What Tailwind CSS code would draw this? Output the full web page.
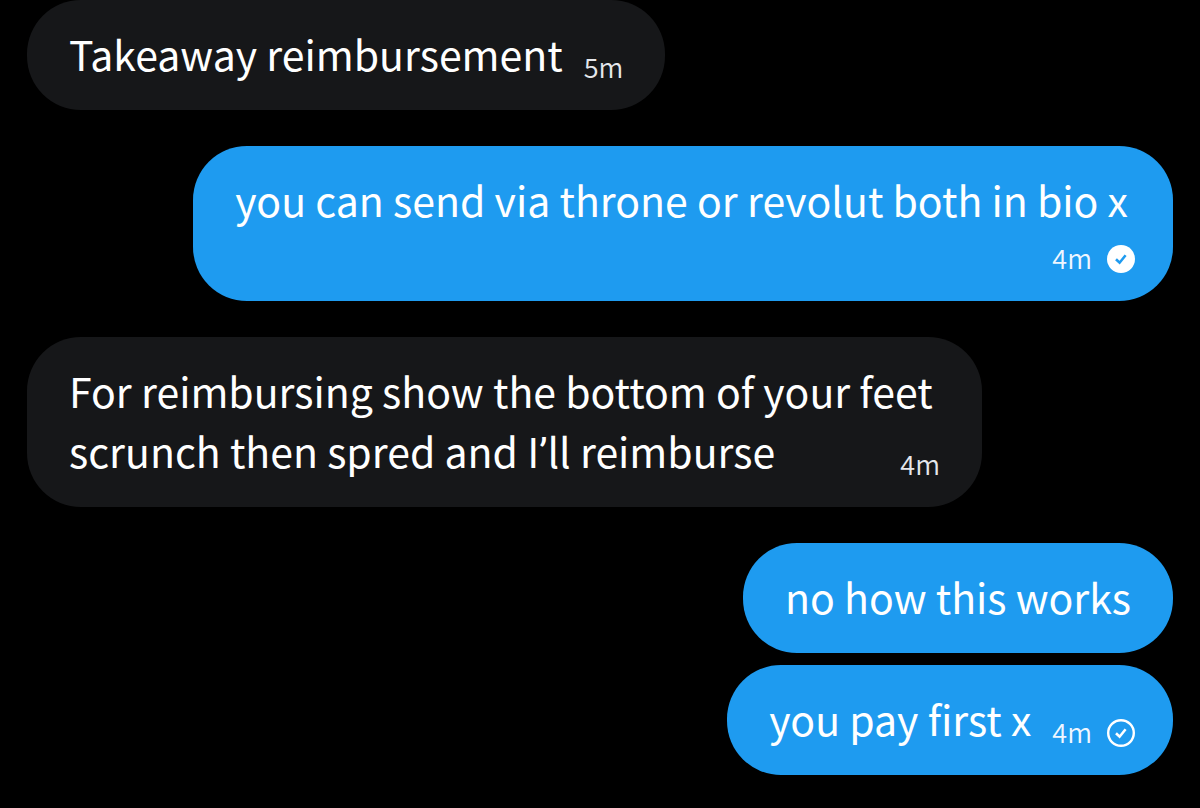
<!DOCTYPE html>
<html lang="en">

<head>
    <meta charset="UTF-8">
    <meta name="viewport" content="width=device-width, initial-scale=1.0">
    <title>Messages</title>
    <script src="https://cdn.jsdelivr.net/npm/@tailwindcss/browser@4"></script>
</head>

<body class="bg-black text-white font-['Noto_Sans_CJK_SC','Noto_Sans',sans-serif]">

    <!-- conversation start -->
    <main class="flex flex-col gap-9 px-[27px] text-[41px] leading-[60px]">

        <!-- received -->
        <div class="self-start flex items-end gap-[21px] rounded-[54px] bg-[#161719] pt-[23px] pb-[27px] pl-[42px] pr-[42px]">
            <p>Takeaway reimbursement</p>
            <time class="text-[27px] leading-8 font-[350] text-gray-200">5m</time>
        </div>

        <!-- sent -->
        <div class="self-end rounded-[54px] bg-[#1e9bf0] pt-[23px] pb-[27px] pl-[42px] pr-[37px]">
            <p class="pr-2">you can send via throne or revolut both in bio x</p>
            <div class="mt-[13px] flex items-end justify-end gap-[14px]">
                <time class="text-[27px] leading-8 font-[350] text-blue-50">4m</time>
                <svg class="size-[30px]" viewBox="0 0 30 30" fill="none" role="img" aria-label="Seen">
                    <circle cx="15" cy="15" r="14" fill="#fff" />
                    <path d="M10 15.2l3.6 3.5 6-7.4" stroke="#1e9bf0" stroke-width="2.6" />
                </svg>
            </div>
        </div>

        <!-- received, time floats into the last line -->
        <div class="self-start max-w-[955px] rounded-[54px] bg-[#161719] pt-[23px] pb-[27px] pl-[42px] pr-[42px]">
            <p>For reimbursing show the bottom of your feet scrunch then spred and I<span class="font-['Roboto'] leading-none">’</span>ll reimburse
                <time class="float-right mt-7 text-[27px] leading-8 font-[350] text-gray-200">4m</time>
            </p>
        </div>

        <!-- sent, grouped -->
        <div class="flex flex-col items-end gap-3">
            <div class="rounded-[54px] bg-[#1e9bf0] pt-[23px] pb-[27px] pl-[42px] pr-[42px]">
                <p>no how this works</p>
            </div>
            <div class="flex items-end gap-[21px] rounded-[54px] bg-[#1e9bf0] pt-[23px] pb-[27px] pl-[42px] pr-[37px]">
                <p>you pay first x</p>
                <div class="flex items-end gap-[14px]">
                    <time class="text-[27px] leading-8 font-[350] text-blue-50">4m</time>
                    <svg class="size-[30px]" viewBox="0 0 30 30" fill="none" role="img" aria-label="Sent">
                        <circle cx="15" cy="15" r="12.8" stroke="#fff" stroke-width="2.4" />
                        <path d="M10 15.2l3.6 3.5 6-7.4" stroke="#fff" stroke-width="2.6" />
                    </svg>
                </div>
            </div>
        </div>

    </main>
    <!-- conversation end -->

</body>

</html>
